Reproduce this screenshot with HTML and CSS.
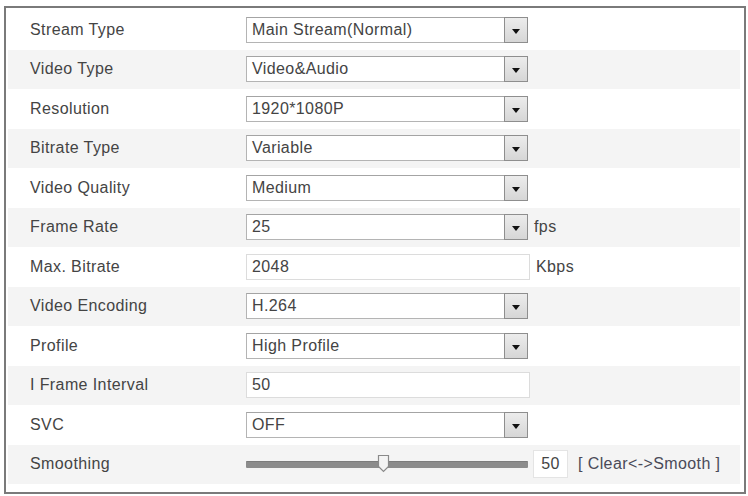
FILE: index.html
```html
<!DOCTYPE html>
<html lang="en">
<head>
    <meta charset="UTF-8">
    <title>Video Settings</title>
    <link rel="stylesheet" href="styles.css">
</head>
<body>
    <div class="panel">
        <div class="row">
            <span class="label">Stream Type</span>
            <div class="select"><span class="value">Main Stream(Normal)</span><span class="arrow"></span></div>
        </div>
        <div class="row">
            <span class="label">Video Type</span>
            <div class="select"><span class="value">Video&amp;Audio</span><span class="arrow"></span></div>
        </div>
        <div class="row">
            <span class="label">Resolution</span>
            <div class="select"><span class="value">1920*1080P</span><span class="arrow"></span></div>
        </div>
        <div class="row">
            <span class="label">Bitrate Type</span>
            <div class="select"><span class="value">Variable</span><span class="arrow"></span></div>
        </div>
        <div class="row">
            <span class="label">Video Quality</span>
            <div class="select"><span class="value">Medium</span><span class="arrow"></span></div>
        </div>
        <div class="row">
            <span class="label">Frame Rate</span>
            <div class="select"><span class="value">25</span><span class="arrow"></span></div>
            <span class="unit">fps</span>
        </div>
        <div class="row">
            <span class="label">Max. Bitrate</span>
            <div class="input">2048</div>
            <span class="unit">Kbps</span>
        </div>
        <div class="row">
            <span class="label">Video Encoding</span>
            <div class="select"><span class="value">H.264</span><span class="arrow"></span></div>
        </div>
        <div class="row">
            <span class="label">Profile</span>
            <div class="select"><span class="value">High Profile</span><span class="arrow"></span></div>
        </div>
        <div class="row">
            <span class="label">I Frame Interval</span>
            <div class="input">50</div>
        </div>
        <div class="row">
            <span class="label">SVC</span>
            <div class="select"><span class="value">OFF</span><span class="arrow"></span></div>
        </div>
        <div class="row">
            <span class="label">Smoothing</span>
            <div class="slider">
                <div class="track"></div>
                <svg class="thumb" width="13" height="19" viewBox="0 0 13 19">
                    <path d="M1.5 1.5 H11.5 V12.5 L6.5 17.5 L1.5 12.5 Z" fill="#f4f4f4" stroke="#8a8a8a" stroke-width="1.2"/>
                </svg>
            </div>
            <div class="num">50</div>
            <span class="hint">[ Clear&lt;-&gt;Smooth ]</span>
        </div>
    </div>
</body>
</html>
```

FILE: styles.css
```css
html, body { margin: 0; padding: 0; background: #fff; }
body {
    font-family: "Liberation Sans", Arial, sans-serif;
    font-size: 16px;
    letter-spacing: 0.4px;
    color: #444;
    width: 748px;
    height: 496px;
    overflow: hidden;
}
.panel {
    margin: 6px 2px 0 4px;
    border: 2px solid #7a7a7a;
    padding: 2px 4px 8px 2px;
    height: 474px;
}
.row {
    height: 39.5px;
    display: flex;
    align-items: center;
    padding-left: 22px;
}
.row:nth-child(even) { background: #f4f4f4; }
.label { width: 216px; flex-shrink: 0; }

.select {
    width: 282px;
    height: 26px;
    box-sizing: border-box;
    border: 1px solid #b4b4b4;
    border-top-color: #a4a4a4;
    background: #fff;
    display: flex;
    align-items: stretch;
}
.select .value { flex: 1; padding-left: 5px; line-height: 24px; }
.select .arrow {
    width: 22px;
    margin: -1px -1px -1px 0;
    border: 1px solid #8e8e8e;
    background: linear-gradient(#ececec, #d6d6d6);
    position: relative;
}
.select .arrow::after {
    content: "";
    position: absolute;
    left: 7px;
    top: 11px;
    border-left: 4px solid transparent;
    border-right: 4px solid transparent;
    border-top: 5px solid #111;
}
.input {
    width: 284px;
    height: 26px;
    box-sizing: border-box;
    border: 1px solid #dcdcdc;
    background: #fff;
    padding-left: 5px;
    line-height: 24px;
}
.unit { margin-left: 6px; }

.slider {
    width: 282px;
    height: 20px;
    position: relative;
    display: flex;
    align-items: center;
}
.track {
    width: 100%;
    height: 6px;
    background: #8c8c8c;
    border-top: 1px solid #7c7c7c;
    border-radius: 1px;
}
.thumb { position: absolute; left: 131px; top: 0; }
.num {
    margin-left: 5px;
    width: 35px;
    height: 28px;
    box-sizing: border-box;
    border: 1px solid #e4e4e4;
    background: #fff;
    text-align: center;
    line-height: 26px;
}
.hint { margin-left: 10px; color: #4a4a58; }
```
